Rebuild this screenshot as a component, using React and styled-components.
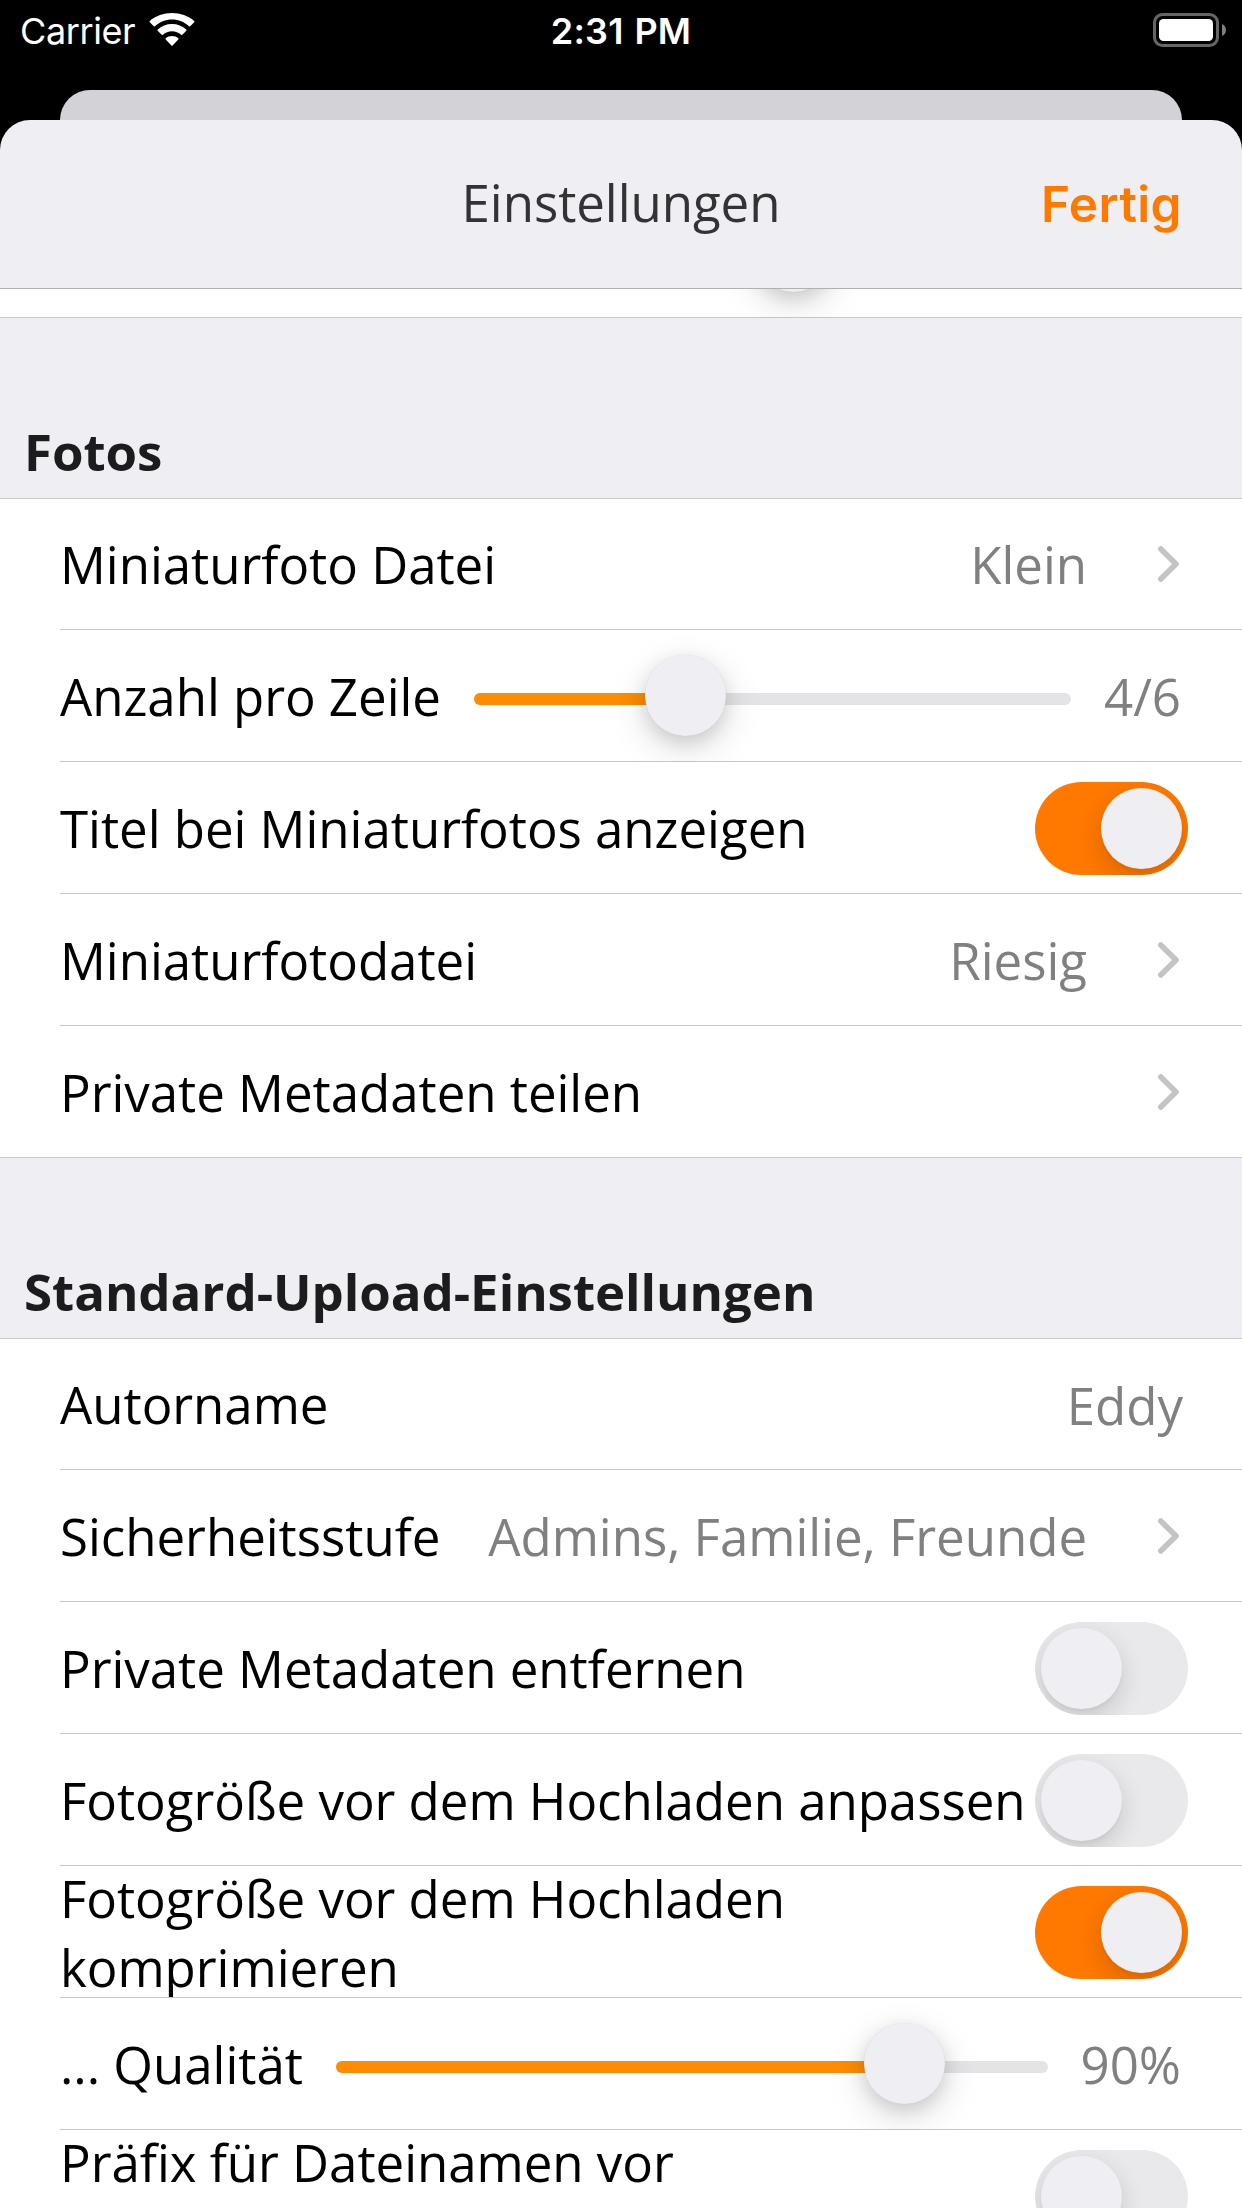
import React from "react";
import styled, { createGlobalStyle, css } from "styled-components";

const Global = createGlobalStyle`
  html, body { margin: 0; padding: 0; background: #000; }
  * { box-sizing: border-box; }
`;

const Screen = styled.div`
  width: 1242px;
  height: 2208px;
  display: flex;
  flex-direction: column;
  overflow: hidden;
  background: #000;
  color: #000;
  font: 400 51px/69px "Open Sans", "Noto Sans", sans-serif;
`;

const StatusBar = styled.header`
  flex: none;
  height: 90px;
  display: grid;
  grid-template-columns: 1fr auto 1fr;
  align-items: start;
  padding: 0 15px;
  color: #fff;
  font: 400 36px/44px Inter, "Liberation Sans", sans-serif;
`;

const Carrier = styled.div`
  display: flex;
  align-items: flex-start;
  gap: 14px;
  padding: 9px 0 0 5px;
  letter-spacing: -0.4px;
`;

const WifiIcon = styled.svg`
  display: block;
  width: 46px;
  height: 34px;
  margin-top: 4px;
`;

const Clock = styled.div`
  padding-top: 9px;
  font-weight: 600;
  letter-spacing: 0.2px;
  word-spacing: 1.5px;
`;

const BatteryIcon = styled.svg`
  display: block;
  justify-self: end;
  width: 74px;
  height: 34px;
  margin-top: 13px;
`;

const BackCard = styled.div`
  flex: none;
  height: 30px;
  margin: 0 60px;
  border-radius: 30px 30px 0 0;
  background: #d3d2d7;
`;

const Sheet = styled.main`
  flex: 1;
  min-height: 0;
  display: flex;
  flex-direction: column;
  overflow: hidden;
  border-radius: 30px 30px 0 0;
  background: #efeef3;
`;

const NavBar = styled.nav`
  flex: none;
  height: 169px;
  display: grid;
  grid-template-columns: 1fr auto 1fr;
  align-items: center;
  padding: 0 60px;
  border-bottom: 1px solid #b0b0b3;
`;

const NavTitle = styled.h1`
  grid-column: 2;
  margin: 0 0 4px;
  font-size: 51px;
  font-weight: 400;
  letter-spacing: -0.05px;
  color: #333336;
`;

const DoneButton = styled.button`
  justify-self: end;
  padding: 0;
  border: 0;
  background: none;
  color: #ff7800;
  font: 600 49.5px/69px Inter, "Liberation Sans", sans-serif;
  letter-spacing: 0.4px;
`;

const Peek = styled.div`
  flex: none;
  height: 29px;
  display: flex;
  align-items: flex-end;
  overflow: hidden;
  padding: 0 0 25px 753px;
  background: #fff;
  border-bottom: 1px solid #c6c6c8;
`;

const SectionTitle = styled.h2`
  flex: none;
  height: 181px;
  margin: 0;
  padding: 99px 24px 0;
  font-size: 51px;
  font-weight: 700;
  letter-spacing: -0.05px;
  color: #1c1c1e;
  border-bottom: 1px solid #c6c6c8;
`;

const List = styled.ul`
  flex: none;
  margin: 0;
  padding: 0;
  list-style: none;
  background: #fff;
  border-bottom: ${(p) => (p.$closed ? "1px solid #c6c6c8" : "0")};
`;

const Row = styled.li`
  height: 132px;
  display: flex;
  align-items: center;
  overflow: hidden;
  margin-left: 60px;
  padding: 2px ${(p) => p.$end ?? 60}px 0 0;
  border-bottom: 1px solid #c6c6c8;
  letter-spacing: -0.025px;
  &:first-child { height: 131px; padding-top: 0; }
  &:last-child { height: 131px; border-bottom: 0; }
`;

const Label = styled.span`
  flex: ${(p) => (p.$wide ? "1" : "none")};
  min-height: ${(p) => (p.$lines ?? 1) * 69}px;
  white-space: ${(p) => (p.$wide ? "normal" : "nowrap")};
`;

const Value = styled.span`
  flex: none;
  margin: ${(p) => p.$drop ?? 0}px 0 0 auto;
  color: #808080;
`;

const ChevronIcon = styled.svg`
  flex: none;
  display: block;
  width: 22px;
  height: 36px;
  margin: 0 0 1px ${(p) => (p.$solo ? "auto" : "71px")};
`;

const thumb = css`
  flex: none;
  width: 81px;
  height: 81px;
  border-radius: 50%;
  background: #efeef3;
`;

const Switch = styled.span`
  flex: none;
  width: 153px;
  height: 93px;
  display: flex;
  justify-content: ${(p) => (p.$on ? "flex-end" : "flex-start")};
  overflow: hidden;
  padding: 6px;
  border-radius: 47px;
  background: ${(p) => (p.$on ? "#ff7800" : "#e9e9eb")};
`;

const SwitchThumb = styled.span`
  ${thumb}
  box-shadow: 0 9px 24px rgba(0, 0, 0, 0.15), 0 3px 3px rgba(0, 0, 0, 0.03);
`;

const Track = styled.span`
  flex: 1;
  height: 12px;
  display: flex;
  align-items: center;
  margin: 5px ${(p) => p.$after}px 0 ${(p) => p.$before}px;
  border-radius: 6px;
  background: #e4e4e6;
`;

const Fill = styled.span`
  flex: none;
  height: 12px;
  border-radius: 6px 0 0 6px;
  background: #ff8c00;
`;

const SliderThumb = styled.span`
  ${thumb}
  margin: ${(p) => (p.$free ? "0" : "-7px 0 0 -4px")};
  box-shadow: 0 12px 39px rgba(0, 0, 0, 0.14), 0 6px 18px rgba(0, 0, 0, 0.12), 0 0 1px rgba(0, 0, 0, 0.1);
`;

const Chevron = ({ solo }) => (
  <ChevronIcon $solo={solo} viewBox="0 0 22 36" aria-hidden="true">
    <path d="M2.800 3 18 18 2.800 33" fill="none" stroke="#c4c4c6" strokeWidth="5.600" strokeLinecap="round" strokeLinejoin="round" />
  </ChevronIcon>
);

const Toggle = ({ on = false }) => (
  <Switch $on={on} role="switch" aria-checked={on}>
    <SwitchThumb />
  </Switch>
);

const Slider = ({ fill, before, after }) => (
  <Track $before={before} $after={after}>
    <Fill style={{ width: fill }} />
    <SliderThumb />
  </Track>
);

const LinkRow = ({ label, value }) => (
  <Row $end={62}>
    <Label>{label}</Label>
    {value && <Value>{value}</Value>}
    <Chevron solo={!value} />
  </Row>
);

const ToggleRow = ({ label, on, lines }) => (
  <Row $end={54}>
    <Label $wide $lines={lines}>{label}</Label>
    <Toggle on={on} />
  </Row>
);

const SliderRow = ({ label, value, fill, before, after }) => (
  <Row $end={61}>
    <Label>{label}</Label>
    <Slider fill={fill} before={before} after={after} />
    <Value>{value}</Value>
  </Row>
);

export default function App() {
  return (
    <Screen>
      <Global />
      <StatusBar>
        <Carrier>
          Carrier
          <WifiIcon viewBox="0 0 46 34" fill="#fff" aria-hidden="true">
            <path d="M23 6.6c6.5 0 12.500 2.500 17 6.700.3.300.9.300 1.200 0l4-4.100c.4-.4.4-.9 0-1.300C39.200 2.900 31.400 0 23 0S6.800 2.900.8 7.900c-.4.4-.4.9 0 1.300l4 4.100c.3.300.9.300 1.200 0 4.500-4.200 10.500-6.700 17-6.700z" />
            <path d="M23 18.200c3.500 0 6.700 1.300 9.100 3.500.4.300.9.300 1.200 0l4-4c.4-.4.4-.9 0-1.300-3.800-3.500-8.800-5.500-14.300-5.500s-10.500 2-14.300 5.500c-.4.4-.4.900 0 1.300l4 4c.3.300.8.300 1.200 0 2.400-2.200 5.600-3.500 9.100-3.500z" />
            <path d="M29.300 26.500c.4-.4.4-.9 0-1.200-1.700-1.400-3.900-2.200-6.300-2.200s-4.600.8-6.300 2.200c-.4.3-.4.800 0 1.200l5.700 6.100c.3.400.9.400 1.200 0z" />
          </WifiIcon>
        </Carrier>
        <Clock>2:31 PM</Clock>
        <BatteryIcon viewBox="0 0 74 34" aria-hidden="true">
          <rect x="1.500" y="1.500" width="63" height="31" rx="8" fill="none" stroke="#666" strokeWidth="3" />
          <rect x="6" y="6" width="54" height="22" rx="4.500" fill="#fff" />
          <path d="M69 11c2.400 1 4 3.300 4 6s-1.600 5-4 6z" fill="#808080" />
        </BatteryIcon>
      </StatusBar>
      <BackCard />
      <Sheet>
        <NavBar>
          <NavTitle>Einstellungen</NavTitle>
          <DoneButton>Fertig</DoneButton>
        </NavBar>
        <Peek>
          <SliderThumb $free />
        </Peek>

        <SectionTitle>Fotos</SectionTitle>
        <List $closed>
          <LinkRow label="Miniaturfoto Datei" value="Klein" />
          <SliderRow label="Anzahl pro Zeile" value="4/6" fill={175} before={33} after={33} />
          <ToggleRow label="Titel bei Miniaturfotos anzeigen" on />
          <LinkRow label="Miniaturfotodatei" value="Riesig" />
          <LinkRow label="Private Metadaten teilen" />
        </List>

        <SectionTitle>Standard-Upload-Einstellungen</SectionTitle>
        <List>
          <Row $end={59}>
            <Label>Autorname</Label>
            <Value $drop={2}>Eddy</Value>
          </Row>
          <LinkRow label="Sicherheitsstufe" value="Admins, Familie, Freunde" />
          <ToggleRow label="Private Metadaten entfernen" />
          <ToggleRow label="Fotogröße vor dem Hochladen anpassen" />
          <ToggleRow label="Fotogröße vor dem Hochladen komprimieren" on />
          <SliderRow label="... Qualität" value="90%" fill={532} before={33} after={33} />
          <ToggleRow label="Präfix für Dateinamen vor" lines={2} />
        </List>
      </Sheet>
    </Screen>
  );
}
